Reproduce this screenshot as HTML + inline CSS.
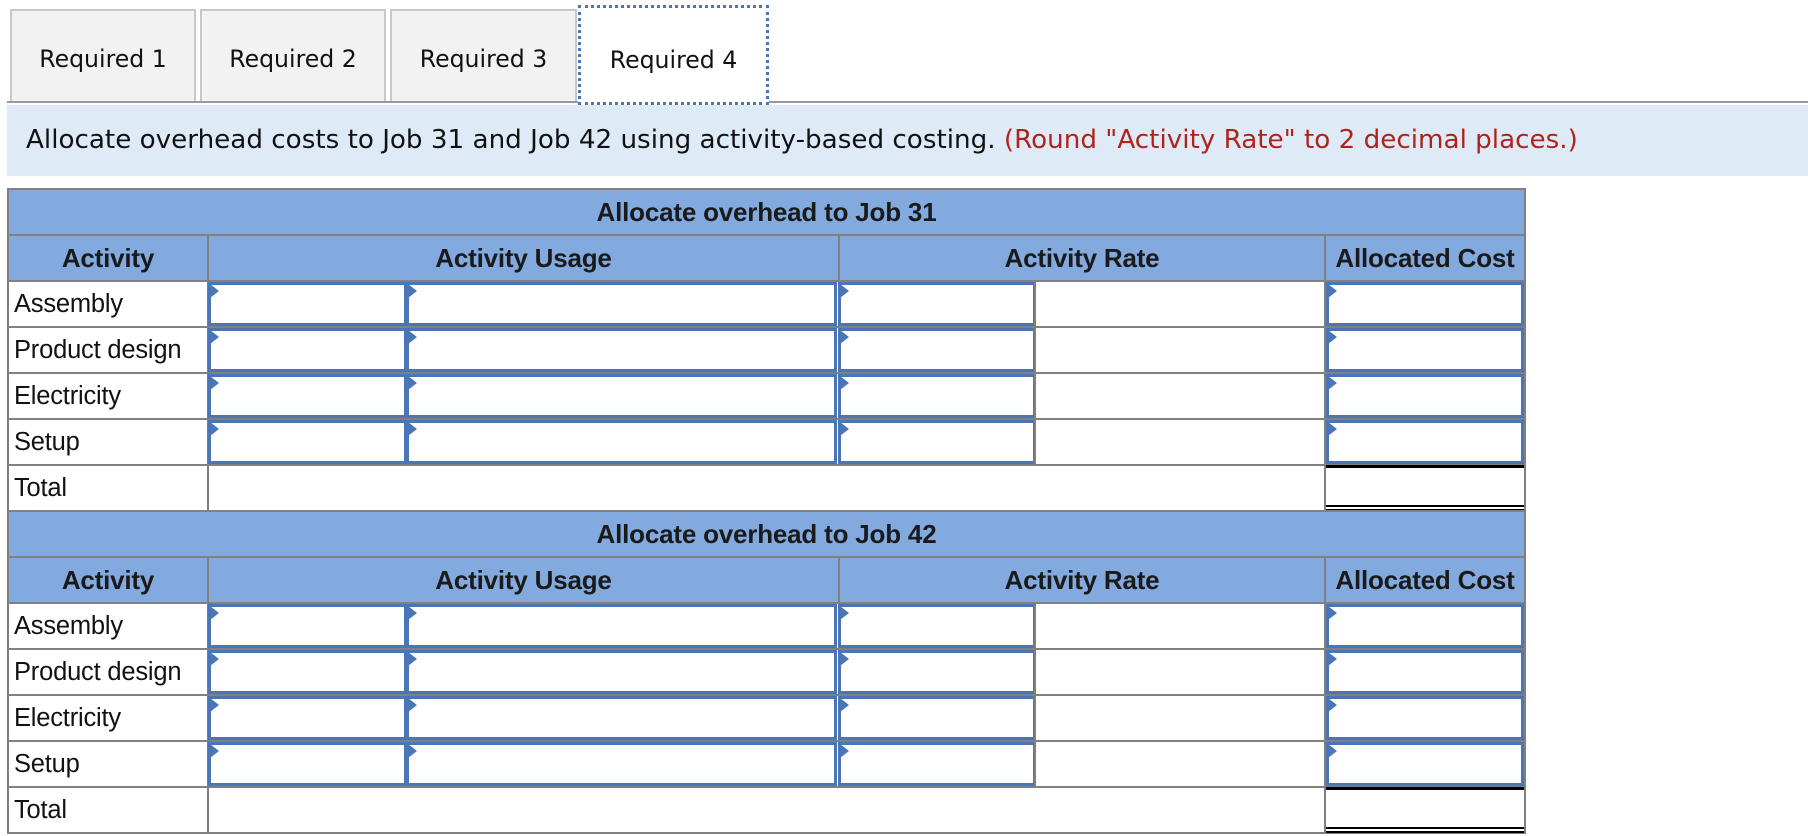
<!DOCTYPE html>
<html><head><meta charset="utf-8"><style>
body{margin:0;width:1808px;height:836px;background:#fff;position:relative;overflow:hidden;font-family:"Liberation Sans",Arial,sans-serif;}
.a{position:absolute;box-sizing:border-box;}
.tab{top:9px;height:93px;background:#f2f2f2;border:2px solid #c8c8c8;border-bottom:none;font-family:"DejaVu Sans",Verdana,sans-serif;font-size:23.6px;color:#111;text-align:center;line-height:96px;}
.cell{border:2px solid #808080;background:#fff;height:48px;}
.hd{background:#82aadf;border:2px solid #808080;height:48px;font-weight:bold;font-size:26px;color:#1a1a1a;text-align:center;line-height:44px;letter-spacing:-0.2px;}
.lab{font-size:25.5px;color:#111;padding-left:5px;line-height:44px;letter-spacing:-0.2px;}
.in{border:3px solid #4a76b8;background:#fff;height:44px;}
.in::before{content:"";position:absolute;left:-1px;top:-1px;border-left:9px solid #4a76b8;border-top:7px solid transparent;border-bottom:7px solid transparent;}
</style></head><body>
<div class="a tab" style="left:10px;width:186px;">Required 1</div>
<div class="a tab" style="left:200px;width:186px;">Required 2</div>
<div class="a tab" style="left:390px;width:187px;">Required 3</div>
<div class="a" style="left:7px;top:101px;width:1801px;height:2px;background:#999;"></div>
<div class="a tab" style="left:578px;top:5px;width:191px;height:100px;background:#fff;border:3px dotted #4a76b8;line-height:104px;">Required 4</div>
<div class="a" style="left:7px;top:105px;width:1801px;height:71px;background:#deebf7;font-family:'DejaVu Sans',Verdana,sans-serif;font-size:26.2px;line-height:70px;padding-left:19px;color:#111;white-space:nowrap;">Allocate overhead costs to Job 31 and Job 42 using activity-based costing. <span style="color:#b0231d">(Round "Activity Rate" to 2 decimal places.)</span></div>
<div id="t"></div>
<script>
var h='';
function blk(y,job){
 h+='<div class="a hd" style="left:7px;top:'+y+'px;width:1519px;">Allocate overhead to Job '+job+'</div>';
 y+=46;
 h+='<div class="a hd" style="left:7px;top:'+y+'px;width:202px;">Activity</div>';
 h+='<div class="a hd" style="left:207px;top:'+y+'px;width:633px;">Activity Usage</div>';
 h+='<div class="a hd" style="left:838px;top:'+y+'px;width:488px;">Activity Rate</div>';
 h+='<div class="a hd" style="left:1324px;top:'+y+'px;width:202px;">Allocated Cost</div>';
 var names=['Assembly','Product design','Electricity','Setup'];
 for(var i=0;i<4;i++){y+=46;
  h+='<div class="a cell lab" style="left:7px;top:'+y+'px;width:202px;">'+names[i]+'</div>';
  h+='<div class="a cell" style="left:207px;top:'+y+'px;width:1319px;"></div>';
  h+='<div class="a in" style="left:208px;top:'+(y+2)+'px;width:199px;"></div>';
  h+='<div class="a in" style="left:406px;top:'+(y+2)+'px;width:431px;"></div>';
  h+='<div class="a in" style="left:838px;top:'+(y+2)+'px;width:198px;"></div>';
  h+='<div class="a cell" style="left:1034px;top:'+y+'px;width:292px;"></div>';
  h+='<div class="a in" style="left:1326px;top:'+(y+2)+'px;width:198px;"></div>';
 }
 y+=46;
 h+='<div class="a cell lab" style="left:7px;top:'+y+'px;width:202px;">Total</div>';
 h+='<div class="a cell" style="left:207px;top:'+y+'px;width:1119px;"></div>';
 h+='<div class="a cell" style="left:1324px;top:'+y+'px;width:202px;"></div>';
 h+='<div class="a" style="left:1326px;top:'+(y+1)+'px;width:198px;height:3px;background:#000;"></div>';
 h+='<div class="a" style="left:1326px;top:'+(y+41)+'px;width:198px;height:6px;border-top:2px solid #000;border-bottom:2px solid #000;"></div>';
}
blk(188,31);blk(510,42);
document.getElementById('t').innerHTML=h;
</script>
</body></html>
